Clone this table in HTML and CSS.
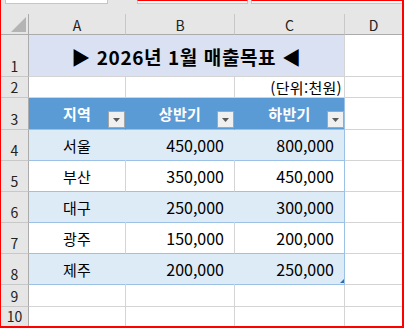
FILE: index.html
```html
<!DOCTYPE html>
<html lang="ko">
<head>
<meta charset="utf-8">
<link rel="stylesheet" href="styles.css">
</head>
<body>
<div class="frame">
  <div class="topbar">
    <div class="namebox"></div>
    <div class="fxbox fx1"></div>
    <div class="fxbox fx2"></div>
  </div>
  <div class="sheet">
    <div class="corner"><svg width="15" height="15" viewBox="0 0 15 15"><polygon points="15,0 15,15 0,15" fill="#b4b4b4"/></svg></div>
    <div class="ch">A</div><div class="ch">B</div><div class="ch">C</div><div class="ch last">D</div>

    <div class="rh">1</div><div class="c title">▶ 2026년 1월 매출목표 ◀</div><div class="c last"></div>

    <div class="rh">2</div><div class="c"></div><div class="c"></div><div class="c unit">(단위:천원)</div><div class="c last"></div>

    <div class="rh">3</div>
    <div class="c th">지역<span class="filter"><svg width="7" height="4" viewBox="0 0 7 4"><polygon points="0,0 7,0 3.5,4" fill="#595959"/></svg></span></div>
    <div class="c th">상반기<span class="filter"><svg width="7" height="4" viewBox="0 0 7 4"><polygon points="0,0 7,0 3.5,4" fill="#595959"/></svg></span></div>
    <div class="c th edge">하반기<span class="filter"><svg width="7" height="4" viewBox="0 0 7 4"><polygon points="0,0 7,0 3.5,4" fill="#595959"/></svg></span></div>
    <div class="c last"></div>

    <div class="rh">4</div><div class="c band name">서울</div><div class="c band num">450,000</div><div class="c band num edge">800,000</div><div class="c last"></div>
    <div class="rh">5</div><div class="c plain name">부산</div><div class="c plain num">350,000</div><div class="c plain num edge">450,000</div><div class="c last"></div>
    <div class="rh">6</div><div class="c band name">대구</div><div class="c band num">250,000</div><div class="c band num edge">300,000</div><div class="c last"></div>
    <div class="rh">7</div><div class="c plain name">광주</div><div class="c plain num">150,000</div><div class="c plain num edge">200,000</div><div class="c last"></div>
    <div class="rh">8</div><div class="c band name">제주</div><div class="c band num">200,000</div><div class="c band num edge">250,000<span class="handle"></span></div><div class="c last"></div>

    <div class="rh">9</div><div class="c"></div><div class="c"></div><div class="c"></div><div class="c last"></div>
    <div class="rh end">10</div><div class="c end"></div><div class="c end"></div><div class="c end"></div><div class="c last end"></div>
  </div>
</div>
</body>
</html>
```

FILE: styles.css
```css
* { box-sizing: border-box; }
html, body { margin: 0; padding: 0; background: #ffffff; }
body { font-family: "Noto Sans CJK KR", "Noto Sans", sans-serif; color: #000; }

.frame {
  width: 404px;
  height: 328px;
  border-left: 1px solid #ff0000;
  border-right: 2px solid #ff0000;
  border-bottom: 2px solid #ff0000;
  background: #ffffff;
  overflow: hidden;
}

.topbar {
  height: 14px;
  background: #e6e6e6;
  display: flex;
  align-items: flex-start;
}
.namebox {
  margin-left: 4px;
  width: 103px;
  height: 4px;
  background: #fff;
  border: 1px solid #c6c6c6;
  border-top: none;
}
.fxbox {
  height: 4px;
  background: #fff;
  border: 1px solid #c6c6c6;
  border-top: 1px solid #ff0000;
}
.fx1 { margin-left: 29px; width: 111px; }
.fx2 { margin-left: 3px; flex: 1; border-right: none; }

.sheet {
  display: grid;
  grid-template-columns: 28px 97px 109px 110px 57px;
  grid-template-rows: 21px 42px 21px 32px repeat(5, 31px) 22px 19px;
}

.corner {
  background: #e6e6e6;
  border-right: 1px solid #ababab;
  border-bottom: 1px solid #ababab;
  display: flex;
  align-items: flex-end;
  justify-content: flex-end;
  padding: 0 2px 2px 0;
}
.corner svg { display: block; }

.ch {
  background: #e6e6e6;
  border-right: 1px solid #c8c8c8;
  border-bottom: 1px solid #ababab;
  font-size: 14px;
  line-height: 14px;
  color: #222;
  display: flex;
  align-items: center;
  justify-content: center;
  padding-top: 2px;
}
.ch.last { border-right: none; }

.rh {
  background: #e6e6e6;
  border-right: 1px solid #ababab;
  border-bottom: 1px solid #c8c8c8;
  font-size: 14px;
  line-height: 14px;
  color: #222;
  display: flex;
  align-items: flex-end;
  justify-content: center;
  padding-bottom: 3px;
}

.c {
  position: relative;
  background: #fff;
  border-right: 1px solid #d4d4d4;
  border-bottom: 1px solid #d4d4d4;
  display: flex;
  align-items: center;
  white-space: nowrap;
}
.c.last { border-right: none; }
.end { border-bottom: none; }

.title {
  grid-column: span 3;
  background: #d9e1f2;
  justify-content: center;
  font-size: 19px;
  letter-spacing: 0.6px;
  font-weight: 700;
  padding-top: 2px;
}

.unit {
  justify-content: flex-end;
  font-size: 15px;
  letter-spacing: 0.3px;
  padding-right: 2px;
  padding-top: 1px;
}

.th {
  background: #5b9bd5;
  border-right-color: #5b9bd5;
  border-bottom-color: #9bc2e6;
  color: #fff;
  font-weight: 700;
  font-size: 15px;
  letter-spacing: 0.3px;
  justify-content: center;
}
.th.edge { border-right-color: #9bc2e6; }

.filter {
  position: absolute;
  right: 0;
  bottom: 1px;
  width: 17px;
  height: 17px;
  background: #f0f0f0;
  border: 1px solid #a6a6a6;
  display: flex;
  align-items: center;
  justify-content: center;
  padding-top: 1px;
  letter-spacing: 0;
}
.filter svg { display: block; }

.band {
  background: #ddebf7;
  border-right-color: #ddebf7;
  border-bottom-color: #9bc2e6;
}
.plain {
  border-bottom-color: #9bc2e6;
}
.edge { border-right-color: #9bc2e6; }
.band.edge { border-right-color: #9bc2e6; }

.name {
  justify-content: center;
  font-size: 15px;
  letter-spacing: 0.3px;
}
.num {
  justify-content: flex-end;
  font-size: 16px;
  padding-right: 10px;
}

.handle {
  position: absolute;
  right: 0;
  bottom: 1px;
  width: 0;
  height: 0;
  border-left: 4px solid transparent;
  border-bottom: 4px solid #2f6db5;
}
```
